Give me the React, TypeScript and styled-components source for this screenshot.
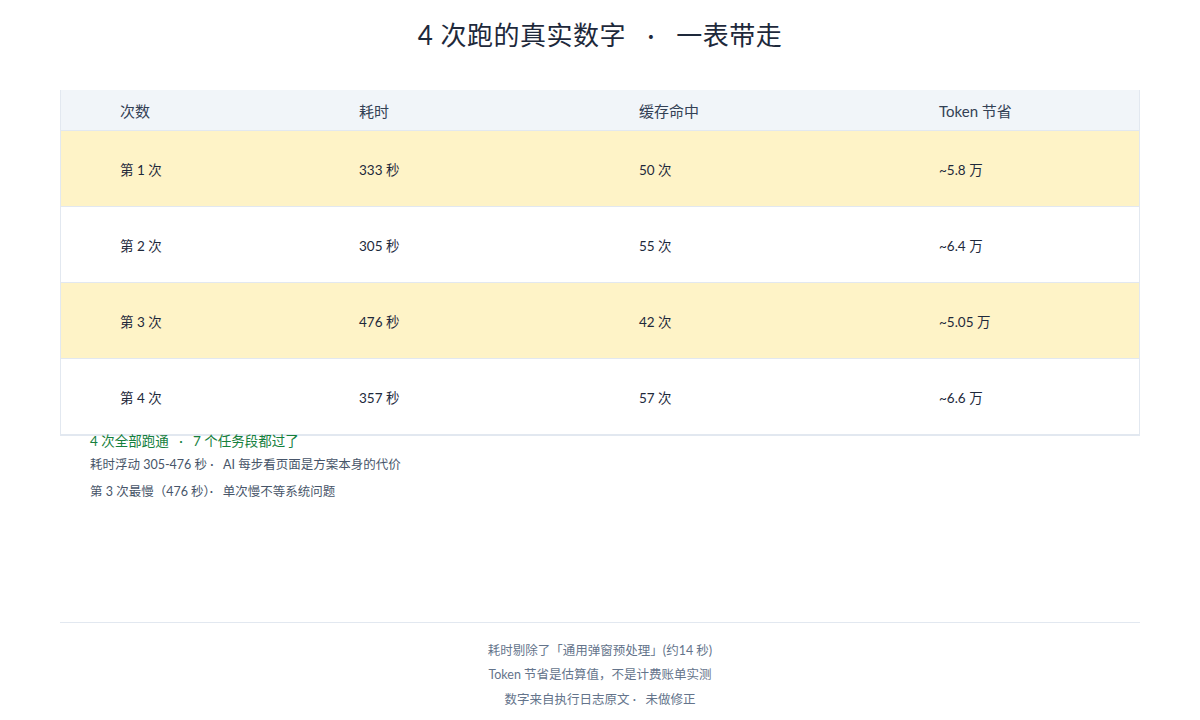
import React from "react";
import styled, { createGlobalStyle } from "styled-components";

const G = createGlobalStyle`
  body { margin: 0; background: #fff; font-family: "Lato", "Noto Sans CJK SC", sans-serif; }
`;
const Page = styled.div`width:1200px;height:720px;display:flex;flex-direction:column;align-items:center;padding-top:17px;box-sizing:border-box;`;
const Title = styled.h1`margin:0;font-weight:400;font-size:26px;color:#1e293b;line-height:36px;letter-spacing:0.5px;white-space:pre;`;
const Table = styled.div`margin-top:37px;width:1080px;border:1px solid #e2e8f0;border-top:none;box-sizing:border-box;display:flex;flex-direction:column;`;
const Row = styled.div<{ $bg: string; $h: number }>`
  display:grid;grid-template-columns:239px 280px 300px 1fr;height:${p => p.$h}px;background:${p => p.$bg};
  border-bottom:1px solid #e2e8f0;align-items:center;box-sizing:border-box;
`;
const Cell = styled.div<{ $head?: boolean }>`padding-left:59px;font-size:${p => (p.$head ? 15 : 13.5)}px;color:${p => (p.$head ? "#334155" : "#1e293b")};`;
const Notes = styled.div`width:1080px;padding-left:30px;box-sizing:border-box;margin-top:-6px;display:flex;flex-direction:column;`;
const Note = styled.div<{ $green?: boolean }>`font-size:${p => (p.$green ? 13.5 : 12.5)}px;color:${p => (p.$green ? "#15803d" : "#475569")};line-height:${p => (p.$green ? 22 : 26.5)}px;white-space:pre;`;
const Footer = styled.div`margin-top:auto;width:1080px;border-top:1px solid #e2e8f0;padding:16px 0 8px;display:flex;flex-direction:column;align-items:center;`;
const FLine = styled.div`font-size:12.5px;color:#64748b;line-height:24.5px;white-space:pre;`;

const rows = [
  ["第 1 次", "333 秒", "50 次", "~5.8 万"],
  ["第 2 次", "305 秒", "55 次", "~6.4 万"],
  ["第 3 次", "476 秒", "42 次", "~5.05 万"],
  ["第 4 次", "357 秒", "57 次", "~6.6 万"],
];

export default function App() {
  return (
    <Page>
      <G />
      <Title>{"4 次跑的真实数字   ·   一表带走"}</Title>
      <Table>
        <Row $bg="#f1f5f9" $h={41}>
          {["次数", "耗时", "缓存命中", "Token 节省"].map(h => <Cell $head key={h}>{h}</Cell>)}
        </Row>
        {rows.map((r, i) => (
          <Row key={i} $bg={i % 2 === 0 ? "#fef3c7" : "#ffffff"} $h={76}>
            {r.map((c, j) => <Cell key={j}>{c}</Cell>)}
          </Row>
        ))}
      </Table>
      <Notes>
        <Note $green>{"4 次全部跑通   ·   7 个任务段都过了"}</Note>
        <Note>{"耗时浮动 305-476 秒 ·   AI 每步看页面是方案本身的代价"}</Note>
        <Note>{"第 3 次最慢（476 秒）·   单次慢不等系统问题"}</Note>
      </Notes>
      <Footer>
        <FLine>耗时剔除了「通用弹窗预处理」(约14 秒)</FLine>
        <FLine>Token 节省是估算值，不是计费账单实测</FLine>
        <FLine>{"数字来自执行日志原文 ·   未做修正"}</FLine>
      </Footer>
    </Page>
  );
}
